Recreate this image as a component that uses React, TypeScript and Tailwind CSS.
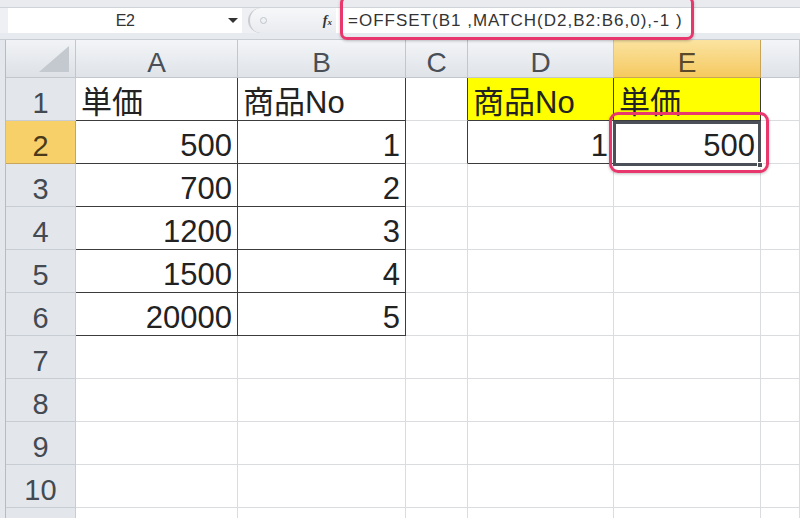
import React from 'react'

const cols = [
  { key: 'A', w: 'w-[162px]' },
  { key: 'B', w: 'w-[168px]' },
  { key: 'C', w: 'w-[62px]' },
  { key: 'D', w: 'w-[146px]' },
  { key: 'E', w: 'w-[147px]' },
  { key: 'F', w: 'flex-1' },
]

type Cell = { text?: string; right?: boolean; yellow?: boolean; darkR?: boolean; darkB?: boolean }

const rows: Record<number, Record<string, Cell>> = {
  1: {
    A: { text: '単価', darkR: true, darkB: true },
    B: { text: '商品No', darkR: true, darkB: true },
    C: { darkR: true },
    D: { text: '商品No', yellow: true, darkR: true, darkB: true },
    E: { text: '単価', yellow: true, darkR: true, darkB: true },
  },
  2: {
    A: { text: '500', right: true, darkR: true, darkB: true },
    B: { text: '1', right: true, darkR: true, darkB: true },
    C: { darkR: true },
    D: { text: '1', right: true, darkR: true, darkB: true },
    E: { text: '500', right: true, darkR: true, darkB: true },
  },
  3: {
    A: { text: '700', right: true, darkR: true, darkB: true },
    B: { text: '2', right: true, darkR: true, darkB: true },
  },
  4: {
    A: { text: '1200', right: true, darkR: true, darkB: true },
    B: { text: '3', right: true, darkR: true, darkB: true },
  },
  5: {
    A: { text: '1500', right: true, darkR: true, darkB: true },
    B: { text: '4', right: true, darkR: true, darkB: true },
  },
  6: {
    A: { text: '20000', right: true, darkR: true, darkB: true },
    B: { text: '5', right: true, darkR: true, darkB: true },
  },
}

function CornerTriangle() {
  return (
    <svg width="30" height="26" viewBox="0 0 30 26" className="absolute right-[6px] bottom-[5px]">
      <polygon points="30,0 30,26 0,26" fill="#c4c9cf" />
    </svg>
  )
}

export default function App() {
  return (
    <div
      className="relative w-[800px] h-[518px] overflow-hidden bg-[#e4e7eb] text-[#222]"
      style={{ fontFamily: '"Liberation Sans", "Noto Sans CJK JP", sans-serif' }}
    >
      {/* top strip */}
      <div className="h-[8px] bg-[#e9ebee] border-b border-[#d0d3d8]" />

      {/* formula bar */}
      <div className="flex h-[25px] bg-[#eef0f3]">
        <div className="ml-[8px] w-[234px] bg-white relative flex items-center justify-center">
          <span className="text-[16px] text-[#333] tracking-[-0.5px]">E2</span>
          <span className="absolute right-[4px] top-[10px] w-0 h-0 border-l-[5px] border-r-[5px] border-t-[5px] border-l-transparent border-r-transparent border-t-[#333]" />
        </div>
        <div className="ml-[6px] w-[88px] flex items-center bg-gradient-to-b from-[#f7f8fa] to-[#e9ebee] rounded-l-full border-l-2 border-[#c9cdd2]">
          <span className="ml-[10px] w-[7px] h-[7px] rounded-full border border-[#c0c4c9]" />
          <span className="ml-auto mr-[4px] italic font-bold text-[14px] text-[#333]" style={{ fontFamily: '"Liberation Serif", serif' }}>
            f<span className="text-[9px]">x</span>
          </span>
        </div>
        <div className="flex-1 bg-white flex items-center pl-[12px]">
          <span className="text-[17px] text-[#333] tracking-[1px]">=OFFSET(B1 ,MATCH(D2,B2:B6,0),-1 )</span>
        </div>
      </div>

      {/* gap below formula bar */}
      <div className="h-[7px] bg-[#e7eaee] border-b border-[#c8cdd3]" />

      {/* sheet */}
      <div className="ml-[5px] border-l border-[#b7bcc2] bg-white">
        {/* column header row */}
        <div className="flex h-[38px]">
          <div className="relative w-[70px] shrink-0 bg-gradient-to-b from-[#f1f3f6] to-[#dde1e6] border-r border-b border-[#c2c7cd]">
            <CornerTriangle />
          </div>
          {cols.map((c) => (
            <div
              key={c.key}
              className={
                c.key === 'E'
                  ? `${c.w} shrink-0 flex items-end justify-center leading-none text-[28px] text-[#5a4a2a] bg-gradient-to-b from-[#fbe3a0] to-[#f5c95e] border-r border-b border-[#c9a55a]`
                  : `${c.w} shrink-0 flex items-end justify-center leading-none text-[28px] text-[#4a4f57] bg-gradient-to-b from-[#f3f5f8] to-[#dfe3e8] border-r border-b border-[#c2c7cd]`
              }
            >
              {c.key !== 'F' ? c.key : ''}
            </div>
          ))}
        </div>

        {/* data rows */}
        {Array.from({ length: 11 }, (_, i) => i + 1).map((r) => (
          <div key={r} className="flex h-[43px]">
            <div
              className={
                r === 2
                  ? 'w-[70px] shrink-0 flex items-end justify-center pb-[2px] leading-none text-[29px] text-[#4a3a1a] bg-[#f7d06a] border-r border-b border-[#c9a55a]'
                  : 'w-[70px] shrink-0 flex items-end justify-center pb-[2px] leading-none text-[29px] text-[#444a52] bg-[#e3e7ec] border-r border-b border-[#c8cdd3]'
              }
            >
              {r <= 10 ? r : ''}
            </div>
            {cols.map((c) => {
              const cell: Cell = rows[r]?.[c.key] ?? {}
              const rightB = cell.darkR ? 'border-r-[#3c3c3c]' : 'border-r-[#dadcdf]'
              const bottomB = cell.darkB ? 'border-b-[#3c3c3c]' : 'border-b-[#dadcdf]'
              return (
                <div
                  key={c.key}
                  className={`${c.w} shrink-0 flex items-end pb-[2px] px-[5px] text-[31px] leading-none h-[43px] border-r border-b ${rightB} ${bottomB} ${
                    cell.yellow ? 'bg-[#ffff00]' : 'bg-white'
                  } ${cell.right ? 'justify-end' : 'justify-start'}`}
                >
                  <span>{cell.text ?? ''}</span>
                </div>
              )
            })}
          </div>
        ))}
      </div>

      {/* active cell E2 */}
      <div className="absolute left-[613px] top-[121px] w-[148px] h-[45px] border-[3px] border-[#4b4f58] pointer-events-none">
        <span className="absolute -right-[5px] -bottom-[5px] w-[6px] h-[6px] bg-[#4b4f58] border border-white" />
      </div>

      {/* pink highlights */}
      <div className="absolute left-[340px] top-[-4px] w-[354px] h-[44px] border-[3px] border-[#e8376c] rounded-[7px] shadow-[0_1px_3px_rgba(0,0,0,0.25)] pointer-events-none" />
      <div className="absolute left-[609px] top-[112px] w-[160px] h-[61px] border-[3px] border-[#e8376c] rounded-[9px] shadow-[0_1px_3px_rgba(0,0,0,0.25)] pointer-events-none" />
    </div>
  )
}
